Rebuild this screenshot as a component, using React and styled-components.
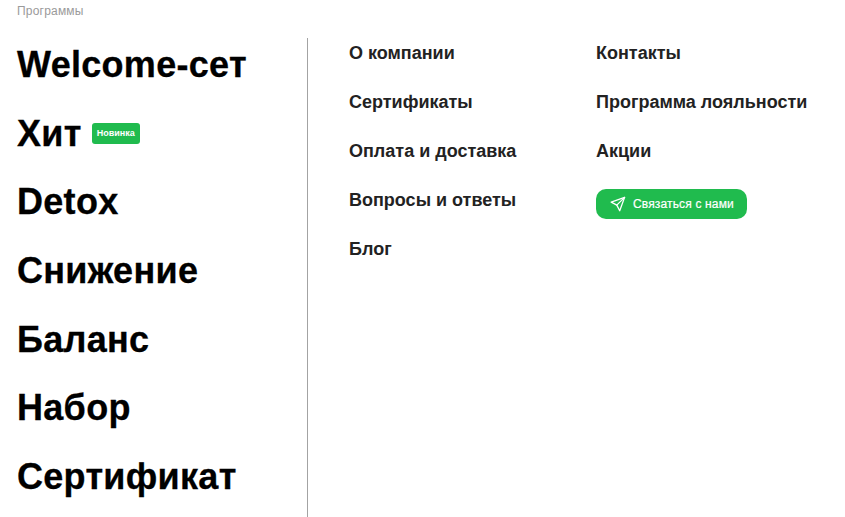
import styled, { createGlobalStyle } from 'styled-components';

const GlobalStyle = createGlobalStyle`
	html, body {
		margin: 0;
		padding: 0;
		height: 100%;
		background: #fff;
		overflow: hidden;
	}
	body {
		font-family: 'Liberation Sans', Arial, sans-serif;
	}
`;

const Page = styled.div`
	width: 845px;
	height: 517px;
	overflow: hidden;
`;

const Caption = styled.div`
	height: 38px;
	padding: 4px 0 0 17px;
	box-sizing: border-box;
	font-size: 12px;
	line-height: 15px;
	letter-spacing: 0.2px;
	color: #9a9a9a;
`;

const Columns = styled.div`
	display: flex;
	height: 479px;
`;

const Programs = styled.ul`
	width: 307px;
	flex-shrink: 0;
	box-sizing: border-box;
	margin: -7px 0 0;
	padding: 0 0 0 17px;
	list-style: none;
`;

const Program = styled.li`
	display: flex;
	align-items: center;
	height: 68.6px;
	font-size: 36px;
	font-weight: 700;
	letter-spacing: 0.3px;
	-webkit-text-stroke: 0.3px #000;
	color: #000;
`;

const Badge = styled.span`
	margin-left: 10px;
	padding: 0 5px;
	height: 21px;
	border-radius: 3px;
	background: #20bb4e;
	color: #fff;
	font-size: 9px;
	line-height: 21px;
	font-weight: 700;
	letter-spacing: 0;
	-webkit-text-stroke: 0;
`;

const Divider = styled.div`
	width: 1px;
	background: #a3a3a3;
`;

const NavArea = styled.div`
	display: flex;
	padding: 0 0 0 41px;
`;

const NavColumn = styled.ul`
	width: ${({ $width }) => $width}px;
	margin: 0;
	padding: 0;
	list-style: none;
	display: flex;
	flex-direction: column;
	align-items: flex-start;
`;

const NavItem = styled.li`
	height: 49px;
	line-height: 30px;
	font-size: 18px;
	font-weight: 700;
	color: #222;
`;

const ContactButton = styled.button`
	display: flex;
	align-items: center;
	gap: 7px;
	height: 30px;
	margin-top: 4px;
	padding: 0 13px 0 14px;
	border: 0;
	border-radius: 10px;
	background: #20bb4e;
	color: #fff;
	font-family: inherit;
	font-size: 12px;
	font-weight: 400;
	letter-spacing: 0.15px;
	-webkit-text-stroke: 0.2px #fff;
`;

const PROGRAMS = ['Welcome-сет', 'Хит', 'Detox', 'Снижение', 'Баланс', 'Набор', 'Сертификат'];
const NAV_LEFT = ['О компании', 'Сертификаты', 'Оплата и доставка', 'Вопросы и ответы', 'Блог'];
const NAV_RIGHT = ['Контакты', 'Программа лояльности', 'Акции'];

const SendIcon = () => (
	<svg width="16" height="16" viewBox="0 0 16 16" fill="none" stroke="#fff" strokeWidth="1.3" strokeLinejoin="round" strokeLinecap="round">
		<path d="M14.6 1.4 1.2 6.2l5.6 2.9 2.9 5.6z" />
		<path d="M14.6 1.4 6.8 9.1" />
	</svg>
);

export default function App() {
	return (
		<Page>
			<GlobalStyle />
			<Caption>Программы</Caption>
			<Columns>
				<Programs>
					{PROGRAMS.map((name) => (
						<Program key={name}>
							{name}
							{name === 'Хит' && <Badge>Новинка</Badge>}
						</Program>
					))}
				</Programs>
				<Divider />
				<NavArea>
					<NavColumn $width={247}>
						{NAV_LEFT.map((name) => (
							<NavItem key={name}>{name}</NavItem>
						))}
					</NavColumn>
					<NavColumn $width={240}>
						{NAV_RIGHT.map((name) => (
							<NavItem key={name}>{name}</NavItem>
						))}
						<ContactButton>
							<SendIcon />
							Связаться с нами
						</ContactButton>
					</NavColumn>
				</NavArea>
			</Columns>
		</Page>
	);
}
